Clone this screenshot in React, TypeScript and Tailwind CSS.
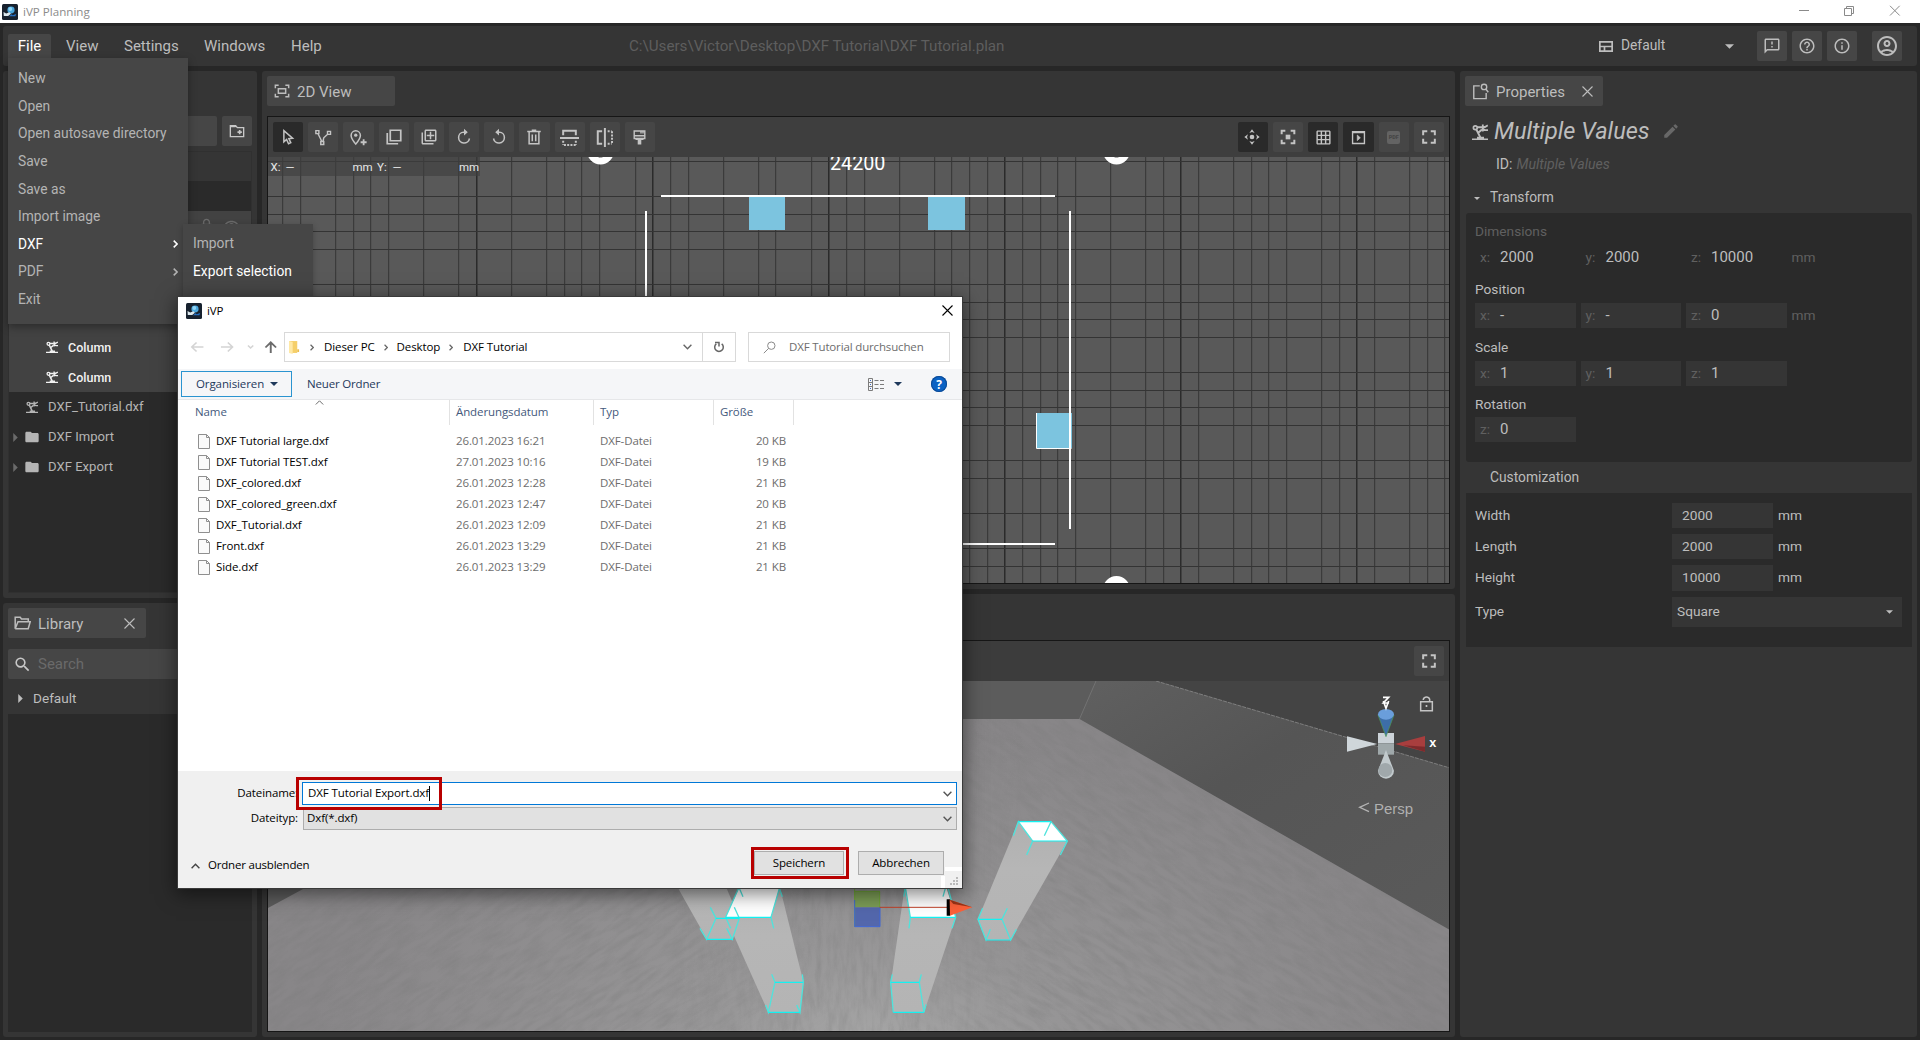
import React from "react";
import {
  MdOutlineFilterNone,
  MdOutlineAddToPhotos,
  MdHelpOutline,
  MdOutlineInfo,
  MdOutlineAccountCircle,
  MdOutlineFeedback,
  MdFolder,
  MdSearch,
  MdEdit,
  MdLockOutline,
  MdOutlineVisibility,
  MdGridOn,
} from "react-icons/md";

type P = { children?: React.ReactNode; className?: string };

function Ico({ children, className = "size-[18px]" }: P) {
  return (
    <svg viewBox="0 0 24 24" className={className} fill="none" stroke="currentColor" strokeWidth="2">
      {children}
    </svg>
  );
}

const Robot = ({ className = "size-4" }: P) => (
  <svg viewBox="0 0 16 16" className={className} fill="none" stroke="currentColor" strokeWidth="1.5">
    <path d="M0 15.200h16M5 13.600h7" strokeWidth="1.600" />
    <circle cx="3.300" cy="3.800" r="1.900" strokeWidth="1.700" />
    <path d="M4.400 5.600L8.300 13.400M6.500 8.600L10 5.600M5 3.300h5.500" strokeWidth="2" />
    <path d="M10.800 .6v6.800M10.800 3h2.200L15.800 1.400M11 4.600l2 1.500h3" strokeWidth="1.800" />
  </svg>
);

const Close = ({ className = "size-[11px]" }: P) => (
  <svg viewBox="0 0 11 11" className={className} fill="none" stroke="currentColor" strokeWidth="1.1">
    <path d="M.5 .5l10 10M10.5 .5l-10 10" />
  </svg>
);

const Down = ({ className = "w-[9px] h-[5px]" }: P) => (
  <svg viewBox="0 0 10 5" className={className} fill="currentColor">
    <path d="M0 0h10L5 5z" />
  </svg>
);

const Right = ({ className = "w-[5px] h-[9px]" }: P) => (
  <svg viewBox="0 0 5 10" className={className} fill="currentColor">
    <path d="M0 0v10l5-5z" />
  </svg>
);

const Chevron = ({ className = "w-[5px] h-[8px]" }: P) => (
  <svg viewBox="0 0 5 8" className={className} fill="none" stroke="currentColor" strokeWidth="1.5">
    <path d="M.7 .6L4.1 4 .7 7.4" />
  </svg>
);

const ChevronV = ({ className = "w-[9px] h-[6px]" }: P) => (
  <svg viewBox="0 0 9 6" className={className} fill="none" stroke="currentColor" strokeWidth="1.4">
    <path d="M.6 .8l3.9 3.9L8.4 .8" />
  </svg>
);

const AppIcon = () => (
  <svg viewBox="0 0 16 16" className="size-4 shrink-0">
    <rect width="16" height="16" rx="1.5" fill="#17212e" />
    <ellipse cx="9" cy="6" rx="3.600" ry="3.400" fill="#4aa6dc" />
    <circle cx="8.300" cy="5" r="1.900" fill="#8fd4f5" />
    <path d="M1.500 8l2.700 1.400 3-1.200 1.800 1.600-2.800 2.200H1.800z" fill="#dce8ee" />
    <path d="M7 12.300l2.500-2 1.200 1 3.500-1.400-.8 2.400z" fill="#2470c4" />
  </svg>
);

function ToolButton({ children, active = false }: { children: React.ReactNode; active?: boolean }) {
  return (
    <div
      className={
        "flex h-[30px] w-[30.2px] shrink-0 items-center justify-center rounded-[2px] " +
        (active ? "bg-[#2a2a2a]" : "bg-[#464646]")
      }
    >
      {children}
    </div>
  );
}

const FullscreenIcon = () => (
  <Ico className="size-[14px]">
    <path d="M2 9V2h7M15 2h7v7M22 15v7h-7M9 22H2v-7" strokeWidth="3.4" />
  </Ico>
);

const leftTools: React.ReactNode[] = [
  <Ico className="size-[18px]">
    <path d="M6.500 3.500v15l3.600-3.100 2.600 5.600 3-1.400-2.600-5.400 5-.5z" />
  </Ico>,
  <Ico>
    <path d="M2.500 3.500h4v4h-4zM18 4.500h4v4h-4zM9 18h4v4H9zM5.500 8l5 10M12 18l1-5 5.500-5" strokeWidth="1.9" />
  </Ico>,
  <Ico>
    <path d="M9 21.500c-4-4.800-6.200-8-6.200-11.500a6.200 6.200 0 0 1 12.400 0c0 3.500-2.200 6.700-6.200 11.500z" />
    <circle cx="9" cy="9.500" r="2.200" fill="currentColor" stroke="none" />
    <path d="M19.500 15v8M15.500 19h8" strokeWidth="2.4" />
  </Ico>,
  <MdOutlineFilterNone className="size-[18px] -scale-x-100 rotate-0" />,
  <MdOutlineAddToPhotos className="size-[18px]" />,
  <Ico>
    <path d="M13 5.500h-1.500a7.300 7.300 0 1 0 7.800 8.500" />
    <path d="M12 1l5 4.500-5 4.500z" fill="currentColor" stroke="none" />
  </Ico>,
  <Ico>
    <path d="M11 5.500h1.500a7.300 7.300 0 1 1-7.800 8.500" />
    <path d="M12 1L7 5.500l5 4.500z" fill="currentColor" stroke="none" />
  </Ico>,
  <Ico>
    <path d="M5.500 5v16h13V5M3 4.500h18M9 3h6M9.700 8.500v9M14.300 8.500v9" />
  </Ico>,
  <Ico className="size-[19px]">
    <path d="M4 9V3.500h16V9M0 12.500h24" strokeWidth="2.500" />
    <path d="M4 16v5M20 16v5M5 21.500h16" strokeDasharray="2.500 1.600" strokeWidth="2.500" />
  </Ico>,
  <Ico className="size-[19px]">
    <path d="M9 4H3.500v16H9M12.500 0v24" strokeWidth="2.500" />
    <path d="M16 4h5M16 20h5M21.500 4v16" strokeDasharray="2.500 1.600" strokeWidth="2.500" />
  </Ico>,
  <svg viewBox="0 0 13 15" className="h-[15px] w-[13px]" fill="none" stroke="currentColor" strokeWidth="1.400">
    <path d="M1.200 1h10.600v7.500H1.200z" />
    <path d="M1 5.800h11M2.500 9.200h8" strokeWidth="1.500" />
    <path d="M6.500 9.500v5" strokeWidth="3.600" />
    <path d="M8 1v2.500M10 1v2.500" />
  </svg>,
];

leftTools[3] = (
  <Ico>
    <path d="M7 3h14v14H7zM3 6.500V21h14.500" strokeWidth="2.300" />
  </Ico>
);

const rightTools: { icon: React.ReactNode; on?: boolean }[] = [
  {
    on: true,
    icon: (
      <svg viewBox="0 0 24 24" className="mr-px size-[16px]" fill="currentColor">
        <circle cx="12" cy="12" r="3.500" />
        <path d="M12 .5l4 5.500-4-1.500L8 6zM12 23.500l4-5.500-4 1.500L8 18zM.5 12L6 8l-1.500 4L6 16zM23.500 12L18 8l1.500 4-1.500 4z" />
      </svg>
    ),
  },
  {
    icon: (
      <Ico className="size-[16px]">
        <path d="M2.500 8V2.500H8M16 2.500h5.500V8M21.500 16v5.500H16M8 21.500H2.500V16" strokeWidth="3" />
        <rect x="8.500" y="8.500" width="7" height="7" fill="currentColor" stroke="none" />
      </Ico>
    ),
  },
  { on: true, icon: <MdGridOn className="size-[17px]" /> },
  {
    on: true,
    icon: (
      <Ico className="size-[15px]">
        <path d="M2.500 2.500h19v19h-19zM2 4h20" strokeWidth="2.200" />
        <path d="M10 8l5 4.500-5 4.500z" fill="currentColor" strokeWidth="1" />
      </Ico>
    ),
  },
  {
    icon: (
      <span className="flex size-[13px] items-center justify-center rounded-[2px] bg-[#636363] font-['Roboto'] text-[5.5px] font-black text-[#464646]">
        PDF
      </span>
    ),
  },
  { icon: <FullscreenIcon /> },
];

const gridX = [
  282, 300, 335, 353, 370, 388, 423, 458, 511, 546, 564, 581, 599, 635, 670, 688, 723, 758, 775, 811, 846, 864, 899, 934, 951, 969,
  987, 1022, 1040, 1057, 1075, 1110, 1145, 1163, 1198, 1233, 1251, 1268, 1286, 1321, 1339, 1374, 1409, 1427, 1444,
];
const gridMajorX = [476, 652, 828, 1004, 1180, 1356];
const gridY = [161, 196, 214, 231, 249, 284, 302, 319, 337, 372, 390, 407, 425, 460, 478, 513, 548, 566];

function PlanCanvas() {
  return (
    <svg viewBox="268 157 1181 426" className="block h-[426px] w-[1181px] bg-[#595959]">
      {gridX.map((x) => (
        <rect key={x} x={x} y="157" width="1.200" height="426" fill="#3b3b3b" />
      ))}
      {gridMajorX.map((x) => (
        <rect key={x} x={x} y="157" width="1.500" height="426" fill="#2b2b2b" />
      ))}
      {gridY.map((y) => (
        <rect key={y} x="268" y={y} width="1182" height="1" fill="#343434" />
      ))}
      <rect x="268" y="157" width="212" height="19" fill="#3f3f3f" fillOpacity=".65" />
      <g fill="#7cc4df">
        <rect x="749" y="197" width="36" height="33" />
        <rect x="928" y="197" width="37" height="33" />
        <rect x="1036" y="413" width="36" height="35" />
      </g>
      <path d="M1036.500 413v35.500h35" stroke="#fff" fill="none" />
      <g fill="#fff">
        <rect x="661" y="195" width="394" height="2" />
        <rect x="645" y="211" width="2" height="320" />
        <rect x="1069" y="211" width="2" height="318" />
        <rect x="661" y="543" width="394" height="2" />
      </g>
      <g fill="none" stroke="#fff" strokeWidth="7">
        <circle cx="600.500" cy="151" r="10" />
        <circle cx="1116.500" cy="151" r="10" />
        <circle cx="1116.500" cy="589.500" r="10" />
      </g>
      <text x="830" y="169.500" fill="#fff" fontFamily="Roboto" fontSize="19.700">
        24200
      </text>
      <g fill="#e8e8e8" fontFamily="Roboto" fontSize="11.500">
        <text x="270.500" y="171">X:</text>
        <text x="285.500" y="171">—</text>
        <text x="352.500" y="171">mm</text>
        <text x="377" y="171">Y:</text>
        <text x="392.500" y="171">—</text>
        <text x="459" y="171">mm</text>
      </g>
    </svg>
  );
}

function SceneCanvas() {
  return (
    <svg viewBox="268 681 1181 350" className="block h-[350px] w-[1181px] bg-[#5c5c5c]">
      <defs>
        <radialGradient id="glow" gradientUnits="userSpaceOnUse" cx="870" cy="1060" r="560" gradientTransform="translate(0 424) scale(1 .6)">
          <stop offset="0" stopColor="#a8a8a8" />
          <stop offset=".35" stopColor="#969596" />
          <stop offset="1" stopColor="#888688" />
        </radialGradient>
        <linearGradient id="col" x1="0" y1="0" x2="0" y2="1">
          <stop offset="0" stopColor="#b0b0b0" />
          <stop offset=".4" stopColor="#b6b6b6" />
          <stop offset="1" stopColor="#b4b4b4" />
        </linearGradient>
        <linearGradient id="wall" x1="0" y1="0" x2="1" y2="1">
          <stop offset="0" stopColor="#606060" />
          <stop offset=".4" stopColor="#555555" />
          <stop offset="1" stopColor="#5a5a5a" />
        </linearGradient>
        <filter id="grain" x="0" y="0" width="100%" height="100%">
          <feTurbulence type="fractalNoise" baseFrequency=".04 .18" numOctaves="4" seed="4" />
          <feColorMatrix values="0 0 0 0 .2  0 0 0 0 .2  0 0 0 0 .2  1.300 0 0 0 -.5" />
        </filter>
        <clipPath id="floor">
          <path d="M617 719H1079.500L1450 930V1031H268V908z" />
        </clipPath>
        <linearGradient id="fadeRight" gradientUnits="userSpaceOnUse" x1="268" x2="1450" y1="0" y2="0">
          <stop offset=".32" stopColor="#fff" />
          <stop offset=".48" stopColor="#000" />
        </linearGradient>
        <linearGradient id="fadeLeft" gradientUnits="userSpaceOnUse" x1="268" x2="1450" y1="0" y2="0">
          <stop offset=".52" stopColor="#000" />
          <stop offset=".66" stopColor="#fff" />
        </linearGradient>
        <linearGradient id="fadeBoth" gradientUnits="userSpaceOnUse" x1="268" x2="1450" y1="0" y2="0">
          <stop offset=".34" stopColor="#000" />
          <stop offset=".46" stopColor="#fff" />
          <stop offset=".54" stopColor="#fff" />
          <stop offset=".64" stopColor="#000" />
        </linearGradient>
        <mask id="leftPart" maskUnits="userSpaceOnUse" x="268" y="681" width="1182" height="350">
          <rect x="268" y="681" width="1182" height="350" fill="url(#fadeRight)" />
        </mask>
        <mask id="rightPart" maskUnits="userSpaceOnUse" x="268" y="681" width="1182" height="350">
          <rect x="268" y="681" width="1182" height="350" fill="url(#fadeLeft)" />
        </mask>
        <mask id="middlePart" maskUnits="userSpaceOnUse" x="268" y="681" width="1182" height="350">
          <rect x="268" y="681" width="1182" height="350" fill="url(#fadeBoth)" />
        </mask>
      </defs>
      <path d="M1096 681L1079.500 719 1450 930V681z" fill="url(#wall)" />
      <path d="M1156 681L1450 768V681z" fill="#444" />
      <path d="M1156 681L1450 768" stroke="#8a8a8a" strokeWidth=".8" strokeDasharray="4 1" />
      <path d="M1096 681L1079.500 719" stroke="#757575" strokeWidth=".9" />
      <g clipPath="url(#floor)">
        <rect x="268" y="681" width="1182" height="350" fill="url(#glow)" />
        <g mask="url(#leftPart)" opacity=".6">
          <rect x="150" y="500" width="900" height="800" filter="url(#grain)" transform="rotate(-33 560 860)" />
        </g>
        <g mask="url(#middlePart)" opacity=".5">
          <rect x="550" y="560" width="600" height="600" filter="url(#grain)" transform="rotate(90 850 860)" />
        </g>
        <g mask="url(#rightPart)" opacity=".6">
          <rect x="700" y="400" width="900" height="900" filter="url(#grain)" transform="rotate(33 1150 860)" />
        </g>
      </g>

      <g transform="translate(480 750) scale(.33333)">
        <g fill="url(#col)">
          <path d="M575 380L665 540 680 568H757L778 505 725 380z" />
          <path d="M737 502L865 787H960L970 695 898 405z" />
          <path d="M1275 405L1233 695 1240 787H1332L1427 502z" />
        </g>
        <path d="M784 400L737 502H873L902 400zM1272 400L1291 502H1427L1395 400z" fill="#fff" />
        <g fill="none" stroke="#4fe3dc" strokeWidth="4">
          <path d="M691 472L708 505 680 568 660 535M763 472L778 505 757 568 740 535" />
          <path d="M780 405L737 502 752 535M778 415L789 440M899 412L873 502 881 535M898 415L907 440" />
          <path d="M875 673L885 697 865 787 857 765M967 673L970 697 960 787 950 765" />
          <path d="M1275 405L1291 502 1287 535M1275 415L1272 440M1402 405L1427 502 1416 535M1396 415L1389 440" />
          <path d="M1237 673L1232 697 1240 787M1324 673L1318 697 1332 787 1338 763" />
        </g>
        <path
          d="M708 505H778M680 568H757M737 502H873M885 697H970M865 787H960M1291 502H1427M1232 697H1318M1240 787H1332"
          stroke="#12f2f2"
          strokeWidth="3.500"
        />
        <rect x="1124" y="424" width="75" height="48" fill="#7b9c55" />
        <rect x="1124" y="472" width="76" height="58" fill="#5367ac" />
        <path d="M1124 530V400M1124 424H1199V472" stroke="#6ea832" strokeWidth="3" fill="none" />
        <path d="M1124 450V530H1200V472" stroke="#3f66d8" strokeWidth="3" fill="none" />
        <path d="M1199 472H1402" stroke="#c03f26" strokeWidth="3" />
        <path d="M1400 448h10l4 24-4 25h-10z" fill="#000" />
        <path d="M1409 449L1477 472 1410 497z" fill="#fb6038" />
        <path d="M1409 449L1477 472 1420 462z" fill="#9c3417" />
      </g>

      <g transform="translate(960 600) scale(.33333)">
        <path d="M175 665L54 958 78 1020H152L322 723z" fill="url(#col)" />
        <path d="M175 665H273L322 723H218z" fill="#fff" />
        <g fill="none" stroke="#4fe3dc" strokeWidth="4">
          <path d="M160 707L175 665 218 723 200 765M253 707L273 665 322 723 301 765" />
          <path d="M68 925L54 958 78 1020 91 988M142 925L126 958 152 1020 169 988" />
        </g>
        <path d="M175 665H273M218 723H322M54 958H126M78 1020H152" stroke="#12f2f2" strokeWidth="3.500" />

        <path d="M1161 409L1252 432 1161 455z" fill="#cfd6da" />
        <path d="M1395 408L1305 432 1395 455z" fill="#a83e3e" />
        <path d="M1395 440L1330 436 1395 455z" fill="#7d2a2c" />
        <rect x="1254" y="399" width="48" height="31" fill="#ccd3d8" />
        <rect x="1254" y="430" width="48" height="34" fill="#9fa8aa" />
        <path d="M1254 345L1278 410 1302 345z" fill="#3d6ea8" stroke="#4f9a52" strokeWidth="2" />
        <ellipse cx="1278" cy="343" rx="24" ry="16" fill="#6a9edb" />
        <path d="M1278 450L1254 512a24 24 0 0 0 48 0z" fill="#c2cacd" />
        <circle cx="1276" cy="510" r="21" fill="#a0a8ab" />
        <path d="M1269 292H1286L1270 309H1287M1270 303L1278 325 1286 303" stroke="#fff" strokeWidth="5" fill="none" />
        <text x="1408" y="440" fill="#fff" fontFamily="Liberation Sans" fontWeight="700" fontSize="38">x</text>
        <path d="M1227 609L1199 622 1227 635" stroke="#b4b4b4" strokeWidth="4" fill="none" />
        <text x="1242" y="641" fill="#b0b0b0" fontFamily="Liberation Sans" fontSize="45">Persp</text>
        <g stroke="#c4c4c4" strokeWidth="4.500" fill="none">
          <path d="M1382 305H1417V332H1382zM1390 300V298a10 10 0 0 1 19 0V305" />
          <path d="M1397 318h5" strokeWidth="6" />
        </g>
      </g>
    </svg>
  );
}

function Tab({ icon, label, className = "", closable = false }: { icon: React.ReactNode; label: string; className?: string; closable?: boolean }) {
  return (
    <div className={"flex h-[30px] items-center rounded-[2px] bg-[#464646] text-[15px] text-[#bdbdbd] " + className}>
      {icon}
      <span className="mt-[2px] ml-[7px] whitespace-nowrap">{label}</span>
      {closable && <Close className="ml-auto size-[11px]" />}
    </div>
  );
}

function Field({ axis, value, plain = false }: { axis: string; value: string; plain?: boolean }) {
  return (
    <div className={"flex h-[25px] w-[100.5px] items-center pl-[5px] " + (plain ? "" : "bg-[#353535]")}>
      <span className="w-5 text-[13.7px] text-[#606060]">{axis}:</span>
      <span className="text-[15px] text-[#bdbdbd]">{value}</span>
    </div>
  );
}

function Size({ label, value, className }: { label: string; value: string; className: string }) {
  return (
    <div className={"flex items-center text-[13.7px] " + className}>
      <span className="w-[197px]">{label}</span>
      <span className="flex h-full w-[101px] items-center bg-[#353535] pl-[10px]">{value}</span>
      <span className="ml-[5px]">mm</span>
    </div>
  );
}

function PropertiesPanel() {
  return (
    <aside className="flex w-[457px] flex-col rounded-[3px] bg-[#353535] text-[#bdbdbd]">
      <Tab
        className="mt-[5px] ml-[5px] w-[138px] pr-[10px] pl-[7px]"
        closable
        label="Properties"
        icon={
          <Ico className="size-[17px]">
            <path d="M11 4H2.500v18H20v-8" />
            <circle cx="17" cy="5.500" r="3.800" />
            <path d="M19.500 8.500l3.500 4.500" />
          </Ico>
        }
      />
      <div className="mt-[10px] ml-[12px] flex h-[30px] items-center">
        <Robot className="mt-px size-4" />
        <span className="mt-px ml-[6px] text-[23.5px] leading-none italic">Multiple Values</span>
        <MdEdit className="ml-3 size-[18px] text-[#686868]" />
      </div>
      <div className="mt-[9px] ml-[36px] flex h-5 items-center gap-1 text-[14.1px]">
        ID: <span className="text-[#606060] italic">Multiple Values</span>
      </div>
      <div className="mt-[13px] ml-[14px] flex h-5 items-center text-[13.8px]">
        <Down className="h-[3px] w-[6px]" />
        <span className="ml-[10px]">Transform</span>
      </div>
      <div className="mt-[5px] ml-[6px] h-[249px] w-[446px] rounded-[3px] bg-[#2a2a2a] pt-2 pl-[9px] text-[13.7px]">
        <div className="h-5 leading-5 text-[#606060]">Dimensions</div>
        <div className="mt-1 flex items-center gap-[5px]">
          <Field axis="x" value="2000" plain />
          <Field axis="y" value="2000" plain />
          <Field axis="z" value="10000" plain />
          <span className="text-[#606060]">mm</span>
        </div>
        <div className="mt-[9px] h-5 leading-5">Position</div>
        <div className="mt-1 flex items-center gap-[5px]">
          <Field axis="x" value="-" />
          <Field axis="y" value="-" />
          <Field axis="z" value="0" />
          <span className="text-[#606060]">mm</span>
        </div>
        <div className="mt-[9px] h-5 leading-5">Scale</div>
        <div className="mt-1 flex gap-[5px]">
          <Field axis="x" value="1" />
          <Field axis="y" value="1" />
          <Field axis="z" value="1" />
        </div>
        <div className="mt-2 h-5 leading-5">Rotation</div>
        <div className="mt-[3px] flex">
          <Field axis="z" value="0" />
        </div>
      </div>
      <div className="ml-[30px] h-[31px] text-[13.8px] leading-[31px]">Customization</div>
      <div className="ml-[6px] h-[154px] w-[446px] bg-[#2a2a2a] pt-[10px] pl-[9px] text-[13.7px]">
        <Size label="Width" value="2000" className="h-[25px]" />
        <Size label="Length" value="2000" className="mt-[6px] h-[25px]" />
        <Size label="Height" value="10000" className="mt-[6px] h-[26px]" />
        <div className="mt-[6px] flex h-[30px] items-center">
          <span className="w-[197px]">Type</span>
          <span className="flex h-full w-[230px] items-center justify-between bg-[#353535] pr-[9px] pl-[5px]">
            Square
            <Down className="h-1 w-[7px]" />
          </span>
        </div>
      </div>
    </aside>
  );
}

function LeftColumn() {
  return (
    <div className="flex w-[254px] flex-col gap-[5px]">
      <section className="flex h-[527px] flex-col rounded-[3px] bg-[#353535] px-[5px] pt-[45px]">
        <div className="flex h-[30px] gap-[5px]">
          <div className="flex-1 rounded-[2px] bg-[#464646]" />
          <div className="flex w-[30px] items-center justify-center rounded-[2px] bg-[#464646] text-[#c8c8c8]">
            <Ico className="size-4">
              <path d="M2 4h8l2.500 3H22v13.500H2zM2 5.500h8" />
              <path d="M16 10.500v6.500M12.700 13.700h6.600" strokeWidth="2.400" />
            </Ico>
          </div>
        </div>
        <div className="mt-[5px] flex h-[442px] flex-col border border-[#303030] bg-[#2a2a2a] text-[13.1px] text-[#b5b5b5]">
          <div className="h-[29px] bg-[#353535]" />
          <div className="h-[30px]" />
          <div className="flex h-[30px] items-center justify-end gap-2 bg-[#424242] pr-[11px] text-[#6a6a6a]">
            <MdLockOutline className="size-[17px]" />
            <MdOutlineVisibility className="size-[17px]" />
          </div>
          <div className="h-[91px] bg-[#424242]" />
          {[0, 1].map((i) => (
            <div key={i} className="flex h-[30px] items-center bg-[#424242] pl-[37px] text-[12.5px] font-medium text-[#f2f2f2]">
              <Robot className="size-3" />
              <span className="mt-px ml-[10px]">Column</span>
            </div>
          ))}
          <div className="flex h-[30px] items-center pl-[17px]">
            <Robot className="size-3" />
            <span className="mt-px ml-[10px]">DXF_Tutorial.dxf</span>
          </div>
          {["DXF Import", "DXF Export"].map((name) => (
            <div key={name} className="flex h-[30px] items-center pl-1">
              <Right className="h-[9px] w-[5px] text-[#6a6a6a]" />
              <MdFolder className="ml-[6px] size-4" />
              <span className="mt-px ml-2">{name}</span>
            </div>
          ))}
        </div>
      </section>
      <section className="flex h-[434px] flex-col rounded-[3px] bg-[#353535] px-[5px] pt-[5px] pb-[5px]">
        <Tab
          className="w-[138px] pr-[11px] pl-[6px]"
          closable
          label="Library"
          icon={
            <svg viewBox="0 0 17 14" className="h-[14px] w-[17px]" fill="none" stroke="currentColor" strokeWidth="1.500">
              <path d="M1.200 12.500V1.300h5l1.300 1.700h6.800v2.500" />
              <path d="M1.200 12.700L4 5.700h12.200l-2 7H1.200" />
            </svg>
          }
        />
        <div className="mt-[11px] flex h-[30px] items-center rounded-[2px] bg-[#464646] pl-[5px] text-[15px] text-[#6a6a6a]">
          <MdSearch className="size-[19px] text-[#c8c8c8]" />
          <span className="ml-[6px]">Search</span>
        </div>
        <div className="flex h-[35px] items-center pt-1 pl-[10px] text-[13.6px] text-[#bdbdbd]">
          <Right className="h-[9px] w-[5px]" />
          <span className="ml-[10px]">Default</span>
        </div>
        <div className="flex-1 bg-[#2a2a2a]" />
      </section>
    </div>
  );
}

function FileMenu() {
  const items = ["New", "Open", "Open autosave directory", "Save", "Save as", "Import image", "DXF", "PDF", "Exit"];
  return (
    <div className="absolute top-[58px] left-[8px] flex h-[266px] w-[180px] flex-col bg-[#464646] pt-[7px] text-[13.8px] text-[#b4b4b4] shadow-[0_3px_8px_rgba(0,0,0,0.35)]">
      {items.map((name) => (
        <div
          key={name}
          className={"flex h-[27.6px] items-center justify-between pr-[10px] pl-[10px] " + (name === "DXF" ? "text-white" : "")}
        >
          {name}
          {(name === "DXF" || name === "PDF") && <Chevron />}
        </div>
      ))}
    </div>
  );
}

const files = [
  ["DXF Tutorial large.dxf", "26.01.2023 16:21", "20 KB"],
  ["DXF Tutorial TEST.dxf", "27.01.2023 10:16", "19 KB"],
  ["DXF_colored.dxf", "26.01.2023 12:28", "21 KB"],
  ["DXF_colored_green.dxf", "26.01.2023 12:47", "20 KB"],
  ["DXF_Tutorial.dxf", "26.01.2023 12:09", "21 KB"],
  ["Front.dxf", "26.01.2023 13:29", "21 KB"],
  ["Side.dxf", "26.01.2023 13:29", "21 KB"],
];

function SaveDialog() {
  return (
    <div className="absolute top-[297px] left-[178px] flex h-[591px] w-[784px] flex-col bg-white font-['Open_Sans','Noto_Sans',sans-serif] text-[11.5px] tracking-[-0.1px] text-black shadow-[0_0_0_1px_#3a3a3a,0_4px_18px_2px_rgba(0,0,0,0.5)]">
      <div className="flex h-[35px] items-start pt-[6px] pr-[9px] pl-2">
        <AppIcon />
        <span className="ml-[5px] leading-4">iVP</span>
        <Close className="mt-[2px] ml-auto size-[11px]" />
      </div>
      <div className="flex h-[30px] items-center">
        <svg viewBox="0 0 100 30" className="h-[30px] w-[106px] shrink-0" fill="none" preserveAspectRatio="none">
          <path d="M13 15h11M17.500 10.500L13 15l4.500 4.500M40.500 15h11M47 10.500l4.500 4.500-4.500 4.500M66 13.500l2.500 2.500 2.500-2.500" stroke="#d4d4d4" strokeWidth="1.500" />
          <path d="M87.500 21V10.500M82.500 15.500l5-5.200 5 5.200" stroke="#6b6b6b" strokeWidth="1.800" />
        </svg>
        <div className="flex h-[30px] w-[452px] items-center border border-[#d9d9d9]">
          <svg viewBox="0 0 12 15" className="ml-1 h-[14px] w-[11px]">
            <path d="M0 1h9v13H0z" fill="#f5cf6a" />
            <path d="M0 1l4 1v13l-4-1z" fill="#ffe9a6" />
            <path d="M9 10h2v3H9z" fill="#e9bd50" />
          </svg>
          <Chevron className="ml-[10px] h-[7px] w-1 text-[#666]" />
          <span className="ml-[10px]">Dieser PC</span>
          <Chevron className="ml-[9px] h-[7px] w-1 text-[#666]" />
          <span className="ml-[9px]">Desktop</span>
          <Chevron className="ml-[9px] h-[7px] w-1 text-[#666]" />
          <span className="ml-[10px]">DXF Tutorial</span>
          <ChevronV className="mr-[10px] ml-auto h-[6px] w-[9px] text-[#666]" />
          <div className="flex h-full w-[33px] items-center justify-center border-l border-[#d9d9d9]">
            <svg viewBox="0 0 12 12" className="size-3" fill="none" stroke="#666" strokeWidth="1.500">
              <path d="M8.700 2.800a4.300 4.300 0 1 1-5.400 0M2 1.500h4v4" />
            </svg>
          </div>
        </div>
        <div className="ml-3 flex h-[30px] w-[202px] items-center border border-[#d9d9d9] pl-[14px] text-[#6d6d6d]">
          <svg viewBox="0 0 13 13" className="size-[13px]" fill="none" stroke="#8a8a8a">
            <circle cx="8.300" cy="4.700" r="3.700" />
            <path d="M5.600 7.400L.8 12.200" />
          </svg>
          <span className="ml-[13px] tracking-[-0.15px]">DXF Tutorial durchsuchen</span>
        </div>
      </div>
      <div className="mt-[7px] flex h-[31px] items-center border-b border-[#e6e7e9] bg-[#f5f6f8] pl-[3px] text-[#1e395b]">
        <div className="flex h-[26px] w-[111px] items-center border border-[#2a94d0] pl-[14px]">
          Organisieren
          <Down className="ml-[6px] h-1 w-[8px]" />
        </div>
        <span className="ml-[15px] tracking-[-0.17px]">Neuer Ordner</span>
        <svg viewBox="0 0 17 13" className="ml-auto h-[13px] w-[17px]" fill="none" stroke="#7c7c7c">
          <path d="M.5 .5h4v12h-4zM.5 4.500h4M.5 8.500h4M6.500 2.500h4M12 2.500h4M6.500 6.500h4M12 6.500h4M6.500 10.500h4M12 10.500h4" />
          <path d="M2 2.500h1M2 6.500h1M2 10.500h1" stroke="#3d6ac0" />
        </svg>
        <Down className="ml-[9px] h-1 w-[8px]" />
        <div className="mr-[15px] ml-[29px] flex size-4 items-center justify-center rounded-full bg-[#0a62c4] text-[12px] font-bold text-white shadow-[inset_0_0_0_1px_#0d4a94]">
          ?
        </div>
      </div>
      <div className="flex h-[25px] items-center text-[#44597c]">
        <div className="relative flex h-full w-[272px] items-center border-r border-[#e2e2e2] pl-[17px]">
          Name
          <svg viewBox="0 0 9 5" className="absolute top-0 left-[137px] h-[5px] w-[9px]" fill="none" stroke="#6a6a6a">
            <path d="M.8 4.500L4.500 .8l3.700 3.700" />
          </svg>
        </div>
        <div className="flex h-full w-[144px] items-center border-r border-[#e2e2e2] pl-[6px]">Änderungsdatum</div>
        <div className="flex h-full w-[120px] items-center border-r border-[#e2e2e2] pl-[6px]">Typ</div>
        <div className="flex h-full w-[80px] items-center border-r border-[#e2e2e2] pl-[6px]">Größe</div>
      </div>
      <div className="mt-[6px] flex flex-1 flex-col text-[#6d6d6d]">
        {files.map(([name, date, size]) => (
          <div key={name} className="flex h-[21px] items-center">
            <div className="flex w-[278px] items-center pl-5 text-black">
              <svg viewBox="0 0 12 15" className="h-[15px] w-3">
                <path d="M.5 .5h8l3 3v11H.5z" fill="#fafafa" stroke="#8f8f8f" />
                <path d="M8.500 .5v3h3" fill="none" stroke="#8f8f8f" />
              </svg>
              <span className="ml-[6px]">{name}</span>
            </div>
            <span className="w-[144px]">{date}</span>
            <span className="w-[120px]">DXF-Datei</span>
            <span className="w-[66px] text-right">{size}</span>
          </div>
        ))}
      </div>
      <div className="flex h-[117px] flex-col bg-[#f0f0f0] pt-[11px]">
        <div className="flex h-[23px] items-center">
          <span className="w-[120px] text-right">Dateiname:</span>
          <div className="ml-1 flex h-full w-[655px] items-center border border-[#0078d7] bg-white pr-1 pl-[5px]">
            DXF Tutorial Export.dxf
            <span className="h-[15px] w-px bg-black" />
            <ChevronV className="ml-auto h-[6px] w-[9px] text-[#555]" />
          </div>
        </div>
        <div className="mt-[2px] flex h-[23px] items-center">
          <span className="w-[120px] text-right">Dateityp:</span>
          <div className="ml-[5px] flex h-full w-[654px] items-center border border-[#adadad] bg-[#e1e1e1] pr-1 pl-[3px]">
            Dxf(*.dxf)
            <ChevronV className="ml-auto h-[6px] w-[9px] text-[#555]" />
          </div>
        </div>
        <div className="mt-[21px] flex h-6 items-center">
          <ChevronV className="mt-[6px] ml-[13px] h-[6px] w-[9px] rotate-180 text-[#444]" />
          <span className="mt-[5px] ml-2 tracking-[-0.2px]">Ordner ausblenden</span>
          <div className="ml-auto flex h-6 w-[90px] items-center justify-center border border-[#adadad] bg-[#e1e1e1]">Speichern</div>
          <div className="mr-[18px] ml-[14px] flex h-6 w-[86px] items-center justify-center border border-[#adadad] bg-[#e1e1e1]">
            Abbrechen
          </div>
        </div>
      </div>
      <div className="absolute top-[480px] left-[118px] h-[33px] w-[146px] border-[3px] border-[#b80000]" />
      <div className="absolute top-[550px] left-[573px] h-[32px] w-[98px] border-[3px] border-[#b80000]" />
      <div className="absolute right-0 bottom-[17px] h-1 w-[17px] bg-white" />
      <div className="absolute right-[17px] bottom-0 h-3 w-1 bg-white" />
      <svg viewBox="0 0 9 9" className="absolute right-[3px] bottom-[2px] size-[9px]" fill="#bababa">
        <path d="M6 0h2v2H6zM6 3h2v2H6zM3 3h2v2H3zM6 6h2v2H6zM3 6h2v2H3zM0 6h2v2H0z" />
      </svg>
    </div>
  );
}

export default function App() {
  return (
    <div className="relative flex h-[1040px] w-[1920px] flex-col overflow-hidden bg-[#272727] font-['Roboto',sans-serif] leading-tight">
      <header className="flex h-[23px] shrink-0 items-center bg-white pr-[19px] pl-[2px] text-[#8b8b8b]">
        <AppIcon />
        <span className="mt-px ml-[5px] font-['Open_Sans',sans-serif] text-[11.6px]">iVP Planning</span>
        <svg viewBox="0 0 102 12" className="mb-px ml-auto h-3 w-[102px]" fill="none" stroke="#8a8a8a">
          <path d="M0 5.500h10M45.500 3.500h7v7h-7zM47.500 3.500v-2h7v7h-2M91 .8l9.700 9.700M100.700 .8L91 10.500" />
        </svg>
      </header>

      <nav className="mx-[3px] mt-[3px] flex h-10 shrink-0 items-center rounded-[3px] bg-[#353535] pl-[5px] text-[15px] text-[#bdbdbd]">
        <div className="mt-[1px] flex h-[26px] w-[43px] items-center justify-center rounded-t-[2px] bg-[#464646] text-white">File</div>
        <span className="ml-[15px] w-[58px]">View</span>
        <span className="w-[80px]">Settings</span>
        <span className="w-[87px]">Windows</span>
        <span className="w-[338px]">Help</span>
        <span className="w-[970px] text-[15.16px] text-[#5e5e5e]">C:\Users\Victor\Desktop\DXF Tutorial\DXF Tutorial.plan</span>
        <svg viewBox="0 0 14 11" className="h-[11px] w-[14px] shrink-0" fill="none" stroke="currentColor" strokeWidth="1.700">
          <path d="M.85 .85h12.300v9.300H.85zM.85 5.500h12.300M5.500 5.500v4.500" />
        </svg>
        <span className="ml-2 w-[104px] shrink-0 text-[13.8px]">Default</span>
        <Down className="h-[5px] w-[9px] shrink-0" />
        <div className="ml-auto mr-[15px] flex gap-[5px] [&>div]:flex [&>div]:size-[30px] [&>div]:items-center [&>div]:justify-center [&>div]:rounded-[2px] [&>div]:bg-[#464646]">
          <div><MdOutlineFeedback className="size-[18px]" /></div>
          <div><MdHelpOutline className="size-[18px]" /></div>
          <div><MdOutlineInfo className="size-[18px]" /></div>
          <div className="ml-[10px]"><MdOutlineAccountCircle className="size-6" /></div>
        </div>
      </nav>

      <main className="mx-[3px] mt-[5px] flex h-[966px] gap-[5px]">
        <LeftColumn />
        <div className="flex w-[1193px] flex-col gap-[5px]">
          <section className="h-[518px] rounded-[3px] bg-[#353535] px-[5px] pt-[5px]">
            <Tab
              className="w-[128px] pl-[7px]"
              label="2D View"
              icon={
                <Ico className="size-4">
                  <path d="M2 8V3.500h5M17 3.500h5V8M22 16v4.500h-5M7 20.500H2V16M6.500 8.500h11v7h-11z" strokeWidth="2.200" />
                </Ico>
              }
            />
            <div className="mt-[10px] h-[468px] w-[1183px] border border-[#161616]">
              <div className="flex h-10 items-center gap-[5px] bg-[#3e3e3e] px-[5px] text-[#c4c4c4]">
                {leftTools.map((icon, i) => (
                  <ToolButton key={i} active={i === 0}>{icon}</ToolButton>
                ))}
                <div className="flex-1" />
                {rightTools.map((t, i) => (
                  <ToolButton key={i} active={t.on}>{t.icon}</ToolButton>
                ))}
              </div>
              <PlanCanvas />
            </div>
          </section>
          <section className="h-[443px] rounded-[3px] bg-[#353535] px-[5px] pt-[46px]">
            <div className="h-[392px] w-[1183px] border border-[#161616]">
              <div className="flex h-10 items-center justify-end bg-[#3c3c3c] px-[5px] text-[#c4c4c4]">
                <ToolButton><FullscreenIcon /></ToolButton>
              </div>
              <SceneCanvas />
            </div>
          </section>
        </div>
        <PropertiesPanel />
      </main>

      <FileMenu />
      <div className="absolute top-[224px] left-[183px] flex h-[90px] w-[130px] flex-col bg-[#464646] pt-[6px] pl-[10px] text-[13.8px] text-[#b4b4b4] shadow-[0_2px_6px_rgba(0,0,0,0.25)]">
        <div className="flex h-[27.6px] items-center">Import</div>
        <div className="flex h-[27.6px] items-center text-white">Export selection</div>
      </div>
      <SaveDialog />
    </div>
  );
}
